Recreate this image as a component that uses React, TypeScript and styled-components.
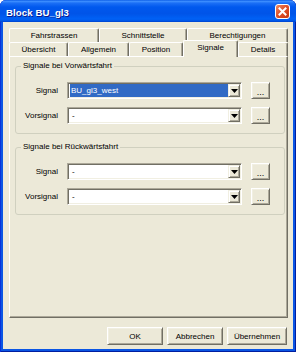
import React from "react";
import styled, { createGlobalStyle } from "styled-components";

const Global = createGlobalStyle`
  html, body { margin: 0; padding: 0; background: #ffffff; }
  body { font-family: "Liberation Sans", Arial, sans-serif; font-size: 8px; color: #000; }
  #root { width: 296px; height: 352px; }
`;

const Window = styled.div`
  width: 296px;
  height: 352px;
  box-sizing: border-box;
  display: flex;
  flex-direction: column;
  background: #0a55e4;
  border-radius: 6px 6px 0 0;
  box-shadow: inset 1px 0 0 #0831d9, inset -1px 0 0 #001ea0, inset 0 -1px 0 #001ea0;
  overflow: hidden;
`;

const TitleBar = styled.div`
  flex: 0 0 22px;
  box-sizing: border-box;
  display: flex;
  align-items: center;
  justify-content: space-between;
  padding: 1px 6px 0 6px;
  background: linear-gradient(
    to bottom,
    #0a5ce6 0%,
    #3d8eff 6%,
    #1b6ff6 14%,
    #0058ee 32%,
    #0054e8 62%,
    #0061f5 86%,
    #0057e8 94%,
    #0042cc 100%
  );
  border-radius: 6px 6px 0 0;
`;

const Title = styled.span`
  color: #ffffff;
  font-weight: bold;
  font-size: 9.6px;
  letter-spacing: 0.1px;
  text-shadow: 1px 1px 0 #0a1b8c;
  padding-top: 2px;
`;

const CloseButton = styled.div`
  width: 15px;
  height: 15px;
  box-sizing: border-box;
  border: 1px solid #ffffff;
  border-radius: 3px;
  background: linear-gradient(135deg, #ee8b63 0%, #e0522a 45%, #c9380f 100%);
  display: flex;
  align-items: center;
  justify-content: center;
`;

const Client = styled.div`
  flex: 1;
  margin: 0 3px 3px 3px;
  background: #ece9d8;
  box-sizing: border-box;
  padding: 6px 5px 4px 6px;
  display: flex;
  flex-direction: column;
`;

const Tabs = styled.div`
  display: flex;
  flex-direction: column;
`;

const TabRow = styled.div`
  display: flex;
  height: 14px;
`;

const Tab = styled.div<{ $w: number; $active?: boolean }>`
  width: ${(p) => p.$w}px;
  flex: 0 0 ${(p) => p.$w}px;
  box-sizing: border-box;
  border-top: 1px solid #ffffff;
  border-left: 1px solid #ffffff;
  border-right: 1px solid #716f64;
  border-radius: 2px 2px 0 0;
  box-shadow: inset -1px 0 0 #aca899;
  background: #ece9d8;
  display: flex;
  align-items: center;
  justify-content: center;
  white-space: nowrap;
  font-size: 8px;
  ${(p) =>
    p.$active
      ? `
    height: 17px;
    margin-top: -2px;
    align-self: flex-start;
    padding-bottom: 3px;
    position: relative;
    z-index: 1;
  `
      : ""}
`;

const Panel = styled.div`
  height: 262px;
  box-sizing: border-box;
  border: 1px solid;
  border-color: #ffffff #716f64 #716f64 #ffffff;
  box-shadow: inset -1px -1px 0 #aca899;
  padding: 4px 2px 0 5px;
  display: flex;
  flex-direction: column;
`;

const GroupBox = styled.fieldset`
  margin: 0;
  padding: 11px 0 9px 0;
  border: 1px solid #d0d0bf;
  border-radius: 3px;
  min-width: 0;
  & + & {
    margin-top: 8px;
  }
`;

const Legend = styled.legend`
  padding: 0 2px;
  margin-left: 5px;
  font-size: 8px;
  line-height: 10px;
  color: #000;
`;

const FieldRow = styled.div`
  display: grid;
  grid-template-columns: 42px 175px 19px;
  column-gap: 9px;
  align-items: center;
  & + & {
    margin-top: 8px;
  }
`;

const Label = styled.span`
  text-align: right;
  font-size: 8px;
  white-space: nowrap;
`;

const Combo = styled.div`
  height: 17px;
  box-sizing: border-box;
  border: 1px solid;
  border-color: #aca899 #ffffff #ffffff #aca899;
  box-shadow: inset 1px 1px 0 #716f64, inset -1px -1px 0 #f1efe2;
  background: #ffffff;
  padding: 1px;
  display: flex;
`;

const ComboText = styled.div<{ $selected?: boolean }>`
  flex: 1;
  display: flex;
  align-items: center;
  padding-left: ${(p) => (p.$selected ? "1px" : "2px")};
  font-size: 8px;
  background: ${(p) => (p.$selected ? "#316ac5" : "transparent")};
  color: ${(p) => (p.$selected ? "#ffffff" : "#000000")};
  margin-left: 1px;
`;

const DropButton = styled.div`
  width: 12px;
  box-sizing: border-box;
  border: 1px solid;
  border-color: #f1efe2 #716f64 #716f64 #f1efe2;
  box-shadow: inset 1px 1px 0 #ffffff, inset -1px -1px 0 #aca899;
  background: #ece9d8;
  display: flex;
  align-items: center;
  justify-content: center;
`;

const RaisedButton = styled.div<{ $w: number; $h: number; $dots?: boolean }>`
  width: ${(p) => p.$w}px;
  height: ${(p) => p.$h}px;
  box-sizing: border-box;
  border: 1px solid;
  border-color: #ffffff #716f64 #716f64 #ffffff;
  box-shadow: inset 1px 1px 0 #f1efe2, inset -1px -1px 0 #aca899;
  background: #ece9d8;
  display: flex;
  align-items: center;
  justify-content: center;
  font-size: ${(p) => (p.$dots ? "9px" : "8px")};
  padding-top: ${(p) => (p.$dots ? "2px" : "0")};
  white-space: nowrap;
`;

const ButtonRow = styled.div`
  margin-top: 9px;
  padding-right: 1px;
  display: flex;
  justify-content: flex-end;
  gap: 4px;
`;

const Arrow = () => (
  <svg width="7" height="4" viewBox="0 0 7 4">
    <polygon points="0,0 7,0 3.5,4" fill="#000" />
  </svg>
);

const CloseX = () => (
  <svg width="9" height="9" viewBox="0 0 9 9">
    <path d="M1.5 1.5 L7.5 7.5 M7.5 1.5 L1.5 7.5" stroke="#fff" strokeWidth="2" strokeLinecap="square" />
  </svg>
);

type FieldProps = { label: string; value: string; selected?: boolean };

const Field = ({ label, value, selected }: FieldProps) => (
  <FieldRow>
    <Label>{label}</Label>
    <Combo>
      <ComboText $selected={selected}>{value}</ComboText>
      <DropButton>
        <Arrow />
      </DropButton>
    </Combo>
    <RaisedButton $w={19} $h={17} $dots>...</RaisedButton>
  </FieldRow>
);

const backTabs = [
  { t: "Fahrstrassen", w: 90 },
  { t: "Schnittstelle", w: 88 },
  { t: "Berechtigungen", w: 101 },
];

const frontTabs = [
  { t: "Übersicht", w: 59 },
  { t: "Allgemein", w: 61 },
  { t: "Position", w: 54 },
  { t: "Signale", w: 55, active: true },
  { t: "Details", w: 50 },
];

export default function App() {
  return (
    <>
      <Global />
      <Window>
        <TitleBar>
          <Title>Block BU_gl3</Title>
          <CloseButton>
            <CloseX />
          </CloseButton>
        </TitleBar>
        <Client>
          <Tabs>
            <TabRow>
              {backTabs.map((t) => (
                <Tab key={t.t} $w={t.w}>
                  {t.t}
                </Tab>
              ))}
            </TabRow>
            <TabRow>
              {frontTabs.map((t) => (
                <Tab key={t.t} $w={t.w} $active={t.active}>
                  {t.t}
                </Tab>
              ))}
            </TabRow>
          </Tabs>
          <Panel>
            <GroupBox>
              <Legend>Signale bei Vorwärtsfahrt</Legend>
              <Field label="Signal" value="BU_gl3_west" selected />
              <Field label="Vorsignal" value="-" />
            </GroupBox>
            <GroupBox>
              <Legend>Signale bei Rückwärtsfahrt</Legend>
              <Field label="Signal" value="-" />
              <Field label="Vorsignal" value="-" />
            </GroupBox>
          </Panel>
          <ButtonRow>
            <RaisedButton $w={56} $h={18}>OK</RaisedButton>
            <RaisedButton $w={56} $h={18}>Abbrechen</RaisedButton>
            <RaisedButton $w={60} $h={18}>Übernehmen</RaisedButton>
          </ButtonRow>
        </Client>
      </Window>
    </>
  );
}
